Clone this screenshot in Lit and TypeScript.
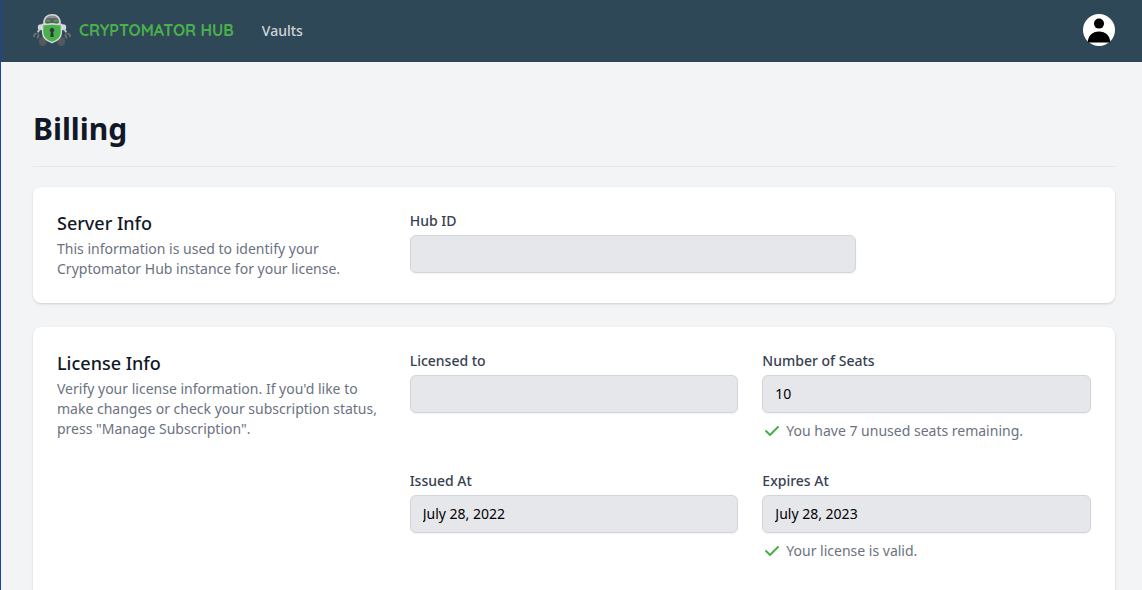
import { LitElement, html, css, svg, nothing } from "lit";
import { customElement } from "lit/decorators.js";

interface Field {
  id: string;
  label: string;
  value: string;
  hint?: string;
}

const licenseFields: Field[] = [
  { id: "licensedTo", label: "Licensed to", value: "" },
  { id: "seats", label: "Number of Seats", value: "10", hint: "You have 7 unused seats remaining." },
  { id: "issuedAt", label: "Issued At", value: "July 28, 2022" },
  { id: "expiresAt", label: "Expires At", value: "July 28, 2023", hint: "Your license is valid." },
];

const robotLogo = html`<svg class="logo" viewBox="0 0 38 32" aria-hidden="true">
  ${svg`
  <g fill="#55595c">
    <ellipse cx="9.8" cy="27.4" rx="4" ry="4.6"/>
    <ellipse cx="28.2" cy="27.4" rx="4" ry="4.6"/>
  </g>
  <g fill="none" stroke="#5a5e61" stroke-width="2.2">
    <path d="M6.6 15 4.4 19.4"/>
    <path d="M31.4 15 33.6 19.4"/>
  </g>
  <g fill="none" stroke="#c3c8cb" stroke-width="1.8">
    <path d="M6.8 14.4 5 18.2"/>
    <path d="M31.2 14.4 33 18.2"/>
  </g>
  <g fill="none" stroke="#6b7073" stroke-width="1.8">
    <path d="M3.6 19.4C1.2 20 .6 21.6 1.4 23.2M4.8 20C6 21.4 5.6 23.2 4 24"/>
    <path d="M34.4 19.4C36.8 20 37.4 21.6 36.6 23.2M33.2 20C32 21.4 32.4 23.2 34 24"/>
  </g>
  <circle cx="7.8" cy="13.2" r="3" fill="#d5d8da"/>
  <circle cx="30.2" cy="13.2" r="3" fill="#d5d8da"/>
  <path d="M10.8 10C10.8 3.8 13.6.8 19 .8S27.2 3.8 27.2 10Z" fill="#8a9093" stroke="#d5d8da" stroke-width="1.4"/>
  <path d="M12.3 8C12.5 5.6 13.4 4.2 15 4.2H23C24.6 4.2 25.5 5.6 25.7 8L24.4 9.8H13.6Z" fill="#5a5f62"/>
  <path d="M12.8 7.4Q15 3.8 17.8 7.4ZM20.2 7.4Q23 3.8 25.2 7.4Z" fill="#49b04a"/>
  <path d="M9.6 10.4Q14.3 11 19 9.8 23.7 11 28.4 10.4V18.2C28.4 23.6 24.4 26.7 19 28.7 13.6 26.7 9.6 23.6 9.6 18.2Z" fill="#49b04a" stroke="#d5d8da" stroke-width="1.4"/>
  <path d="M19 13.8A2.4 2.4 0 0 0 17.8 18.2L17.3 23H20.7L20.2 18.2A2.4 2.4 0 0 0 19 13.8Z" fill="#2c3a3f"/>`}
</svg>`;

const checkIcon = html`<svg class="check" viewBox="0 0 20 20" aria-hidden="true">
  <path fill-rule="evenodd" clip-rule="evenodd" d="M16.707 5.293a1 1 0 010 1.414l-8 8a1 1 0 01-1.414 0l-4-4a1 1 0 011.414-1.414L8 12.586l7.293-7.293a1 1 0 011.414 0z"/>
</svg>`;

@customElement("app-root")
export class AppRoot extends LitElement {
  static styles = css`
    :host {
      display: block;
      box-sizing: border-box;
      min-height: 100vh;
      border-left: 1px solid #1e429f;
      background: #f3f4f6;
      color: #111827;
      font: 14px/20px "Noto Sans", sans-serif;
    }
    *, *::before, *::after { box-sizing: border-box; }
    h1, h2, p { margin: 0; }
    .nav {
      display: flex;
      align-items: center;
      padding: 14px 27px 16px 32px;
      background: #2f4858;
    }
    .brand {
      display: flex;
      align-items: center;
      gap: 8px;
      color: #49b04a;
      font: 700 16px/24px Quicksand, Lato, sans-serif;
      text-decoration: none;
    }
    .logo { display: block; width: 38px; height: 32px; }
    .link {
      margin-left: 28px;
      padding-top: 2px;
      color: #d1d5db;
      font-weight: 500;
      text-decoration: none;
    }
    .profile {
      margin-left: auto;
      padding: 0;
      border: 0;
      border-radius: 50%;
      background: none;
      cursor: pointer;
    }
    .avatar { display: block; width: 32px; height: 32px; }
    .main { padding: 49px 27px 48px 32px; }
    .title {
      padding-bottom: 19px;
      border-bottom: 1px solid #e5e7eb;
      font-size: 30px;
      line-height: 36px;
      font-weight: 700;
    }
    .cards {
      display: grid;
      gap: 24px;
      margin-top: 20px;
    }
    .card {
      display: grid;
      grid-template-columns: repeat(3, minmax(0, 1fr));
      gap: 24px;
      padding: 24px;
      border-radius: 8px;
      background: #fff;
      box-shadow: 0 1px 3px rgba(0, 0, 0, 0.1), 0 1px 2px rgba(0, 0, 0, 0.06);
    }
    .card-tall { padding-bottom: 48px; }
    .heading {
      font-size: 18px;
      line-height: 24px;
      font-weight: 500;
    }
    .text { margin-top: 4px; color: #6b7280; }
    .fields {
      grid-column: span 2;
      display: grid;
      grid-template-columns: repeat(6, minmax(0, 1fr));
      gap: 30px 24px;
      align-content: start;
    }
    .half { grid-column: span 3; }
    .wide { grid-column: span 4; }
    .label {
      display: block;
      color: #374151;
      font-weight: 500;
    }
    .input {
      display: block;
      width: 100%;
      height: 38px;
      margin-top: 4px;
      padding: 7px 12px 9px;
      border: 1px solid #d1d5db;
      border-radius: 6px;
      background: #e5e7eb;
      box-shadow: 0 1px 2px rgba(0, 0, 0, 0.05);
      color: #000;
      font: inherit;
    }
    .hint {
      display: flex;
      gap: 4px;
      margin-top: 8px;
      color: #6b7280;
    }
    .check { width: 20px; height: 20px; fill: #49b04a; }
  `;

  private field(f: Field, span: string) {
    return html`<div class=${span}>
      <label class="label" for=${f.id}>${f.label}</label>
      <input class="input" id=${f.id} type="text" .value=${f.value} readonly />
      ${f.hint ? html`<p class="hint">${checkIcon}${f.hint}</p>` : nothing}
    </div>`;
  }

  render() {
    return html`
      <nav class="nav">
        <a class="brand" href="#home">${robotLogo}<span>CRYPTOMATOR HUB</span></a>
        <a class="link" href="#vaults">Vaults</a>
        <button class="profile" type="button" aria-label="Open user menu">
          <svg class="avatar" viewBox="0 0 32 32" aria-hidden="true">
            <circle cx="16" cy="16" r="16" fill="#fff"/>
            <circle cx="16" cy="9.6" r="5"/>
            <path d="M4.8 28.4C4.8 21.8 9.4 17.4 16 17.4S27.2 21.8 27.2 28.4Z"/>
          </svg>
        </button>
      </nav>
      <main class="main">
        <h1 class="title">Billing</h1>
        <div class="cards">
          <section class="card">
            <div>
              <h2 class="heading">Server Info</h2>
              <p class="text">This information is used to identify your Cryptomator Hub instance for your license.</p>
            </div>
            <div class="fields">${this.field({ id: "hubId", label: "Hub ID", value: "" }, "wide")}</div>
          </section>
          <section class="card card-tall">
            <div>
              <h2 class="heading">License Info</h2>
              <p class="text">Verify your license information. If you'd like to make changes or check your subscription status, press "Manage Subscription".</p>
            </div>
            <div class="fields">${licenseFields.map((f) => this.field(f, "half"))}</div>
          </section>
        </div>
      </main>
    `;
  }
}
